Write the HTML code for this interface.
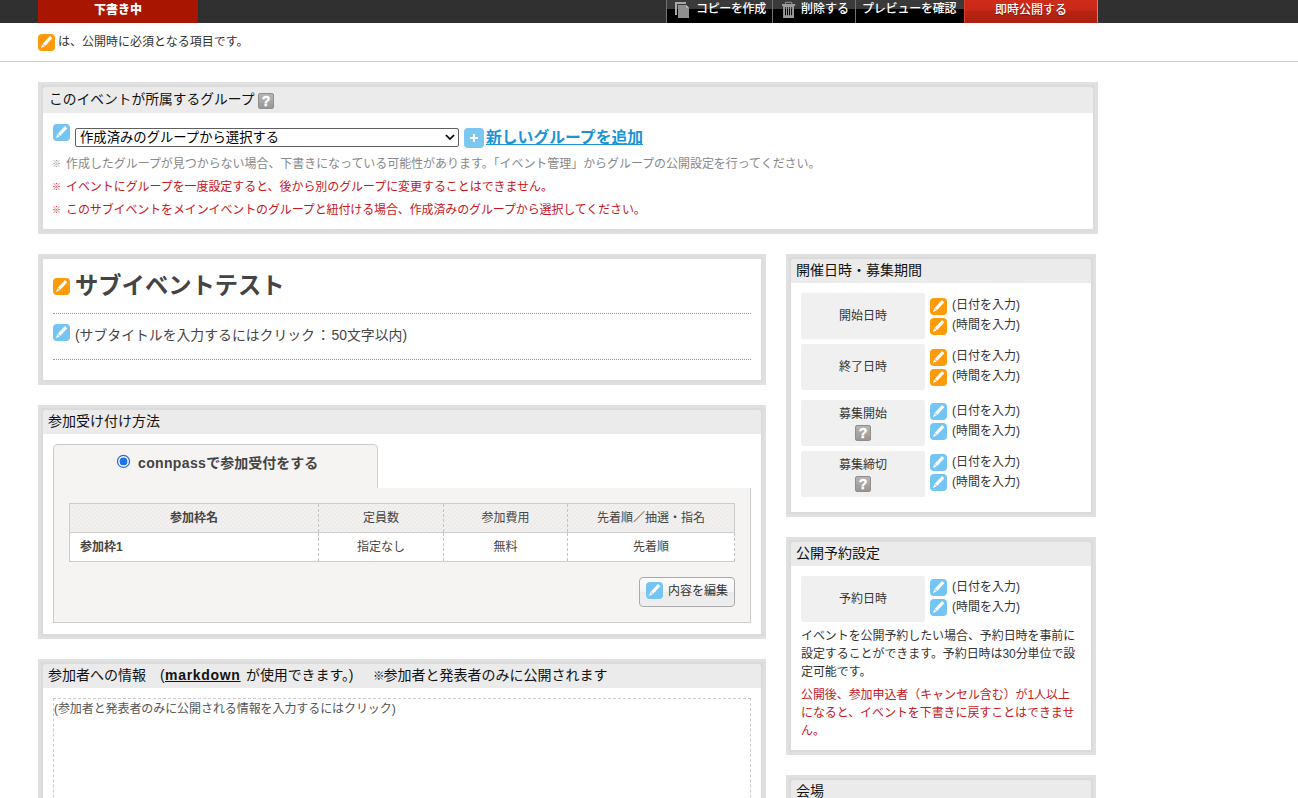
<!DOCTYPE html>
<html lang="ja">
<head>
<meta charset="utf-8">
<title>イベント編集</title>
<style>
*{box-sizing:border-box;margin:0;padding:0}
html,body{width:1298px;height:798px;overflow:hidden;background:#fff}
body{position:relative;font-family:"Liberation Sans","Noto Sans CJK JP",sans-serif;font-size:12px;color:#333;line-height:1.5}
.abs{position:absolute}
/* top bar */
#bar{left:0;top:0;width:1298px;height:23px;background:#303030}
#draft{left:38px;top:0;width:160px;height:23px;background:#a81500;color:#fff;font-weight:900;font-size:12px;line-height:20px;text-align:center}
.tb{top:0;height:23px;color:#fff;font-size:12px;font-weight:500;line-height:19px;white-space:nowrap;background:linear-gradient(#3a3a3a 0,#3a3a3a 9.5px,#000 9.5px,#000 100%);border-left:1px solid #707070}
#pub{left:964px;top:0;width:134px;height:23px;background:linear-gradient(#cf2b1a 0,#ca2918 10px,#b82413 11px,#ad2010 100%);color:#fff;font-size:12px;font-weight:500;line-height:21px;text-align:center;border-left:1px solid #d8412f;border-right:1px solid #e07a6c;text-shadow:0 1px 1px rgba(90,0,0,.6)}
/* note */
#note{left:58px;top:33px;font-size:12px;line-height:18px;color:#333;white-space:nowrap}
#hr{left:0;top:61px;width:1298px;height:1px;background:#cfcfcf}
/* boxes */
.box{border:5px solid #e0e0e0;background:#fff}
.wh{background:linear-gradient(#dbdbdb 0,#dbdbdb 4px,#fff 4px)}
.box:before{content:"";position:absolute;left:-2px;top:-2px;right:-2px;bottom:-2px;border:2px solid #dbdbdb}
.hd{left:0;top:0;right:0;background:#ebebeb;border-radius:3px 3px 0 0;color:#111;font-size:14px;white-space:nowrap;padding-left:5px}
.ic{position:absolute;width:17px;height:17px;display:block}
.q{position:absolute;width:16px;height:16px;display:block;border:1px solid #8e8e8e;border-radius:2px;background:linear-gradient(#b6b6b6,#979797);color:#fff;font-family:"Liberation Sans",sans-serif;font-weight:bold;font-size:14px;line-height:15px;text-align:center;-webkit-text-stroke:.4px #fff;padding-left:.2px}
.t{position:absolute;white-space:nowrap}
.red{color:#c8161d}
.gray{color:#888}
#sel{left:75px;top:128px;width:384px;height:19px;border:1px solid #606060;border-radius:2px;background:#fff;color:#000;font-size:13.33px;line-height:17px;padding-left:4px;white-space:nowrap}
#newg{left:486px;top:126px;font-size:15.8px;text-underline-offset:1.4px;text-decoration-thickness:1.4px;font-weight:bold;color:#1a94d6;text-decoration:underline;line-height:24px}
#title{left:75px;top:268px;font-size:23.3px;font-weight:bold;color:#444;line-height:36px}
#subt{left:75px;top:325px;font-size:13.85px;color:#444;line-height:20px}
.dot{height:0;border-top:1px dotted #999}
.kome{display:inline-block;width:14px;margin-left:-1px;font-size:9px;font-weight:500;vertical-align:1px}
#tab{left:53px;top:444px;width:325px;height:45px;background:#f5f4f2;border:1px solid #ccc;border-bottom:0;border-radius:5px 5px 0 0}
#panel{left:53px;top:488px;width:698px;height:135px;background:#f5f4f2;border:1px solid #ccc;border-top:0}
#rlabel{left:138px;top:452px;font-size:14px;font-weight:bold;color:#444;line-height:22px}
#tbl{left:69px;top:503px;width:666px;border-collapse:collapse;table-layout:fixed;font-size:12px;color:#444}
#tbl th,#tbl td{height:29px;border:1px solid #ccc;border-left:1px dashed #c4c4c4;border-right:1px dashed #c4c4c4;text-align:center;font-weight:normal;padding:0;line-height:16px}
#tbl th{background-color:#f0efed;background-image:linear-gradient(135deg,#e9e8e5 25%,#f6f5f3 25%,#f6f5f3 50%,#e9e8e5 50%,#e9e8e5 75%,#f6f5f3 75%);background-size:4px 4px}
#tbl td{background:#fff}
#tbl th:first-child,#tbl td:first-child{border-left:1px solid #ccc}
#tbl th:last-child{border-right:1px solid #ccc}
#editbtn{left:639px;top:577px;width:96px;height:30px;border:1px solid #aaa;border-radius:4px;background:linear-gradient(#fbfbfb 0,#f5f5f5 50%,#ebebeb 50%,#eee 100%);font-size:12px;color:#333;line-height:26px;padding-left:28px;white-space:nowrap}
.ih{top:664px;font-size:14px;line-height:22px;color:#111}
#infoarea{left:53px;top:698px;width:698px;height:120px;border:1px dashed #ccc;font-size:12px;color:#555;line-height:18px;padding:1px 0 0 0;letter-spacing:-.08px;white-space:nowrap}
.v{font-size:12px;line-height:18px;color:#333}
#rtxt{left:801px;top:626.6px;font-size:12px;line-height:18px;color:#333;letter-spacing:-.08px}
#rred{left:801px;top:686px;font-size:12px;line-height:18px;letter-spacing:-.08px}
.lab{position:absolute;width:124px;height:46px;background:#f0f0f0;border-radius:2px;text-align:center;font-size:12px;color:#333}
</style>
</head>
<body>
<div class="abs" id="bar"></div>
<div class="abs" id="draft">下書き中</div>
<div class="abs tb" style="left:666px;width:106px;padding-left:29px;letter-spacing:-.35px">コピーを作成</div>
<div class="abs tb" style="left:772px;width:83px;padding-left:28px">削除する</div>
<div class="abs tb" style="left:855px;width:109px;padding-left:6px;letter-spacing:-.2px">プレビューを確認</div>
<svg class="abs" style="left:674px;top:0" width="17" height="20" viewBox="0 0 17 20"><path d="M1 15 V2 H12 V4 H3 V15 Z" fill="#a9a9a9"/><path d="M4 5 H12.3 L15 7.7 V18 H4 Z" fill="#8e908d"/><path d="M12.3 5 L15 7.7 H12.3 Z" fill="#c4c4c4"/></svg>
<svg class="abs" style="left:781px;top:0" width="16" height="20" viewBox="0 0 16 20"><path d="M4.4 4 V2.3 H10.8 V4" fill="none" stroke="#9b9b9b" stroke-width=".9"/><rect x="1" y="4" width="13.2" height="2" fill="#9b9b9b"/><path d="M2.1 6 H13 V18 H2.1 Z M4 7 V15.2 H5 V7 Z M6 7 V15.2 H7 V7 Z M8 7 V15.2 H9 V7 Z M10.1 7 V15.2 H11.1 V7 Z" fill="#9b9b9b" fill-rule="evenodd"/></svg>
<div class="abs" id="pub">即時公開する</div>

<svg class="ic" viewBox="0 0 17 17" style="left:38px;top:34px"><rect width="17" height="17" rx="4" fill="#ff9a0a"/><path d="M12 2 L14.3 4.3 L7.1 12 L4.8 9.7 Z M4.3 10.3 L6.6 12.6 L2.9 14.1 Z" fill="#fff"/></svg>
<div class="abs" id="note">は、公開時に必須となる項目です。</div>
<div class="abs" id="hr"></div>

<!-- group box -->
<div class="abs box wh" style="left:38px;top:82px;width:1060px;height:152px">
  <div class="abs hd" style="height:26px;line-height:25px;font-size:13.75px;padding-left:6px">このイベントが所属するグループ</div>
</div>
<span class="q" style="left:258px;top:93px">?</span>
<svg class="ic" viewBox="0 0 17 17" style="left:53px;top:124px"><rect width="17" height="17" rx="4" fill="#74c5f3"/><path d="M12 2 L14.3 4.3 L7.1 12 L4.8 9.7 Z M4.3 10.3 L6.6 12.6 L2.9 14.1 Z" fill="#fff"/></svg>
<div class="abs" id="sel">作成済みのグループから選択する<svg width="10" height="7" viewBox="0 0 10 7" style="position:absolute;right:3.5px;top:5px"><path d="M0.9 1 L5 5 L9.1 1" fill="none" stroke="#000" stroke-width="1.7"/></svg></div>
<svg class="abs" style="left:464px;top:128px" width="20" height="20"><rect width="20" height="20" rx="4" fill="#7cc7f0"/><path d="M10 6 V14 M6 10 H14" stroke="#fff" stroke-width="2"/></svg>
<div class="t" id="newg">新しいグループを追加</div>
<div class="t gray" style="left:53px;top:155px;line-height:18px;letter-spacing:-.053px"><span class="kome">※</span>作成したグループが見つからない場合、下書きになっている可能性があります。「イベント管理」からグループの公開設定を行ってください。</div>
<div class="t red" style="left:53px;top:178px;line-height:18px;letter-spacing:-.07px"><span class="kome">※</span>イベントにグループを一度設定すると、後から別のグループに変更することはできません。</div>
<div class="t red" style="left:53px;top:201px;line-height:18px;letter-spacing:-.125px"><span class="kome">※</span>このサブイベントをメインイベントのグループと紐付ける場合、作成済みのグループから選択してください。</div>

<!-- title box -->
<div class="abs box" style="left:38px;top:254px;width:728px;height:131px"></div>
<svg class="ic" viewBox="0 0 17 17" style="left:53px;top:278px"><rect width="17" height="17" rx="4" fill="#ff9a0a"/><path d="M12 2 L14.3 4.3 L7.1 12 L4.8 9.7 Z M4.3 10.3 L6.6 12.6 L2.9 14.1 Z" fill="#fff"/></svg>
<div class="t" id="title">サブイベントテスト</div>
<div class="abs dot" style="left:53px;top:313px;width:698px"></div>
<svg class="ic" viewBox="0 0 17 17" style="left:53px;top:324px"><rect width="17" height="17" rx="4" fill="#74c5f3"/><path d="M12 2 L14.3 4.3 L7.1 12 L4.8 9.7 Z M4.3 10.3 L6.6 12.6 L2.9 14.1 Z" fill="#fff"/></svg>
<div class="t" id="subt">(サブタイトルを入力するにはクリック<span style="padding:0 1.4px">：</span>50文字以内)</div>
<div class="abs dot" style="left:53px;top:359px;width:698px"></div>

<!-- join box -->
<div class="abs box wh" style="left:38px;top:405px;width:728px;height:234px">
  <div class="abs hd" style="height:24px;line-height:22px">参加受け付け方法</div>
</div>
<div class="abs" id="tab"></div>
<div class="abs" id="panel"></div>
<svg class="abs" style="left:116px;top:454px" width="15" height="15"><circle cx="7.5" cy="7.4" r="6" fill="#fff" stroke="#3569d8" stroke-width="1.3"/><circle cx="7.5" cy="7.4" r="3.9" fill="#1a73e8"/></svg>
<div class="t" id="rlabel"><span style="letter-spacing:.35px">connpass</span>で参加受付をする</div>
<table class="abs" id="tbl" cellspacing="0">
<tr><th style="width:249px;font-weight:bold">参加枠名</th><th style="width:125px">定員数</th><th style="width:124px">参加費用</th><th>先着順／抽選・指名</th></tr>
<tr><td style="text-align:left;padding-left:10px;font-weight:bold">参加枠1</td><td>指定なし</td><td>無料</td><td>先着順</td></tr>
</table>
<div class="abs" id="editbtn">内容を編集</div>
<svg class="ic" viewBox="0 0 17 17" style="left:646px;top:582px"><rect width="17" height="17" rx="4" fill="#74c5f3"/><path d="M12 2 L14.3 4.3 L7.1 12 L4.8 9.7 Z M4.3 10.3 L6.6 12.6 L2.9 14.1 Z" fill="#fff"/></svg>

<!-- info box -->
<div class="abs box wh" style="left:38px;top:659px;width:728px;height:200px">
  <div class="abs hd" style="height:24px;line-height:22px"></div>
</div>
<div class="t ih" style="left:48px">参加者への情報　(</div>
<div class="t ih" style="left:165px;font-weight:bold;text-decoration:underline;letter-spacing:.7px">markdown</div>
<div class="t ih" style="left:246px;letter-spacing:-.1px">が使用できます。)</div>
<div class="t ih" style="left:373px"><span style="display:inline-block;width:10.5px;font-size:11.5px;vertical-align:0">※</span>参加者と発表者のみに公開されます</div>
<div class="abs" id="infoarea">(参加者と発表者のみに公開される情報を入力するにはクリック)</div>

<!-- date box -->
<div class="abs box wh" style="left:786px;top:254px;width:310px;height:263px">
  <div class="abs hd" style="height:24px;line-height:22px;font-size:14px">開催日時・募集期間</div>
</div>
<div class="lab abs" style="left:801px;top:293px;line-height:47px">開始日時</div>
<svg class="ic" viewBox="0 0 17 17" style="left:930px;top:298px"><rect width="17" height="17" rx="4" fill="#ff9a0a"/><path d="M12 2 L14.3 4.3 L7.1 12 L4.8 9.7 Z M4.3 10.3 L6.6 12.6 L2.9 14.1 Z" fill="#fff"/></svg>
<div class="t v" style="left:952px;top:296px">(日付を入力)</div>
<svg class="ic" viewBox="0 0 17 17" style="left:930px;top:318px"><rect width="17" height="17" rx="4" fill="#ff9a0a"/><path d="M12 2 L14.3 4.3 L7.1 12 L4.8 9.7 Z M4.3 10.3 L6.6 12.6 L2.9 14.1 Z" fill="#fff"/></svg>
<div class="t v" style="left:952px;top:316px">(時間を入力)</div>
<div class="lab abs" style="left:801px;top:344px;line-height:47px">終了日時</div>
<svg class="ic" viewBox="0 0 17 17" style="left:930px;top:349px"><rect width="17" height="17" rx="4" fill="#ff9a0a"/><path d="M12 2 L14.3 4.3 L7.1 12 L4.8 9.7 Z M4.3 10.3 L6.6 12.6 L2.9 14.1 Z" fill="#fff"/></svg>
<div class="t v" style="left:952px;top:347px">(日付を入力)</div>
<svg class="ic" viewBox="0 0 17 17" style="left:930px;top:369px"><rect width="17" height="17" rx="4" fill="#ff9a0a"/><path d="M12 2 L14.3 4.3 L7.1 12 L4.8 9.7 Z M4.3 10.3 L6.6 12.6 L2.9 14.1 Z" fill="#fff"/></svg>
<div class="t v" style="left:952px;top:367px">(時間を入力)</div>
<div class="lab abs" style="left:801px;top:400px;line-height:18px;padding-top:5px">募集開始</div>
<span class="q" style="left:855px;top:425px">?</span>
<svg class="ic" viewBox="0 0 17 17" style="left:930px;top:403px"><rect width="17" height="17" rx="4" fill="#74c5f3"/><path d="M12 2 L14.3 4.3 L7.1 12 L4.8 9.7 Z M4.3 10.3 L6.6 12.6 L2.9 14.1 Z" fill="#fff"/></svg>
<div class="t v" style="left:952px;top:402px">(日付を入力)</div>
<svg class="ic" viewBox="0 0 17 17" style="left:930px;top:423px"><rect width="17" height="17" rx="4" fill="#74c5f3"/><path d="M12 2 L14.3 4.3 L7.1 12 L4.8 9.7 Z M4.3 10.3 L6.6 12.6 L2.9 14.1 Z" fill="#fff"/></svg>
<div class="t v" style="left:952px;top:422px">(時間を入力)</div>
<div class="lab abs" style="left:801px;top:451px;line-height:18px;padding-top:5px">募集締切</div>
<span class="q" style="left:855px;top:476px">?</span>
<svg class="ic" viewBox="0 0 17 17" style="left:930px;top:454px"><rect width="17" height="17" rx="4" fill="#74c5f3"/><path d="M12 2 L14.3 4.3 L7.1 12 L4.8 9.7 Z M4.3 10.3 L6.6 12.6 L2.9 14.1 Z" fill="#fff"/></svg>
<div class="t v" style="left:952px;top:453px">(日付を入力)</div>
<svg class="ic" viewBox="0 0 17 17" style="left:930px;top:474px"><rect width="17" height="17" rx="4" fill="#74c5f3"/><path d="M12 2 L14.3 4.3 L7.1 12 L4.8 9.7 Z M4.3 10.3 L6.6 12.6 L2.9 14.1 Z" fill="#fff"/></svg>
<div class="t v" style="left:952px;top:473px">(時間を入力)</div>

<!-- reserve box -->
<div class="abs box wh" style="left:786px;top:537px;width:310px;height:218px">
  <div class="abs hd" style="height:24px;line-height:22px;font-size:14px">公開予約設定</div>
</div>
<div class="lab abs" style="left:801px;top:576px;line-height:47px">予約日時</div>
<svg class="ic" viewBox="0 0 17 17" style="left:930px;top:579px"><rect width="17" height="17" rx="4" fill="#74c5f3"/><path d="M12 2 L14.3 4.3 L7.1 12 L4.8 9.7 Z M4.3 10.3 L6.6 12.6 L2.9 14.1 Z" fill="#fff"/></svg>
<div class="t v" style="left:952px;top:578px">(日付を入力)</div>
<svg class="ic" viewBox="0 0 17 17" style="left:930px;top:599px"><rect width="17" height="17" rx="4" fill="#74c5f3"/><path d="M12 2 L14.3 4.3 L7.1 12 L4.8 9.7 Z M4.3 10.3 L6.6 12.6 L2.9 14.1 Z" fill="#fff"/></svg>
<div class="t v" style="left:952px;top:598px">(時間を入力)</div>
<div class="t" id="rtxt">イベントを公開予約したい場合、予約日時を事前に<br>設定することができます。予約日時は30分単位で設<br>定可能です。</div>
<div class="t red" id="rred">公開後、参加申込者（キャンセル含む）が1人以上<br>になると、イベントを下書きに戻すことはできませ<br>ん。</div>

<!-- venue box -->
<div class="abs box wh" style="left:786px;top:775px;width:310px;height:100px">
  <div class="abs hd" style="height:24px;line-height:22px;font-size:14px">会場</div>
</div>
</body>
</html>
